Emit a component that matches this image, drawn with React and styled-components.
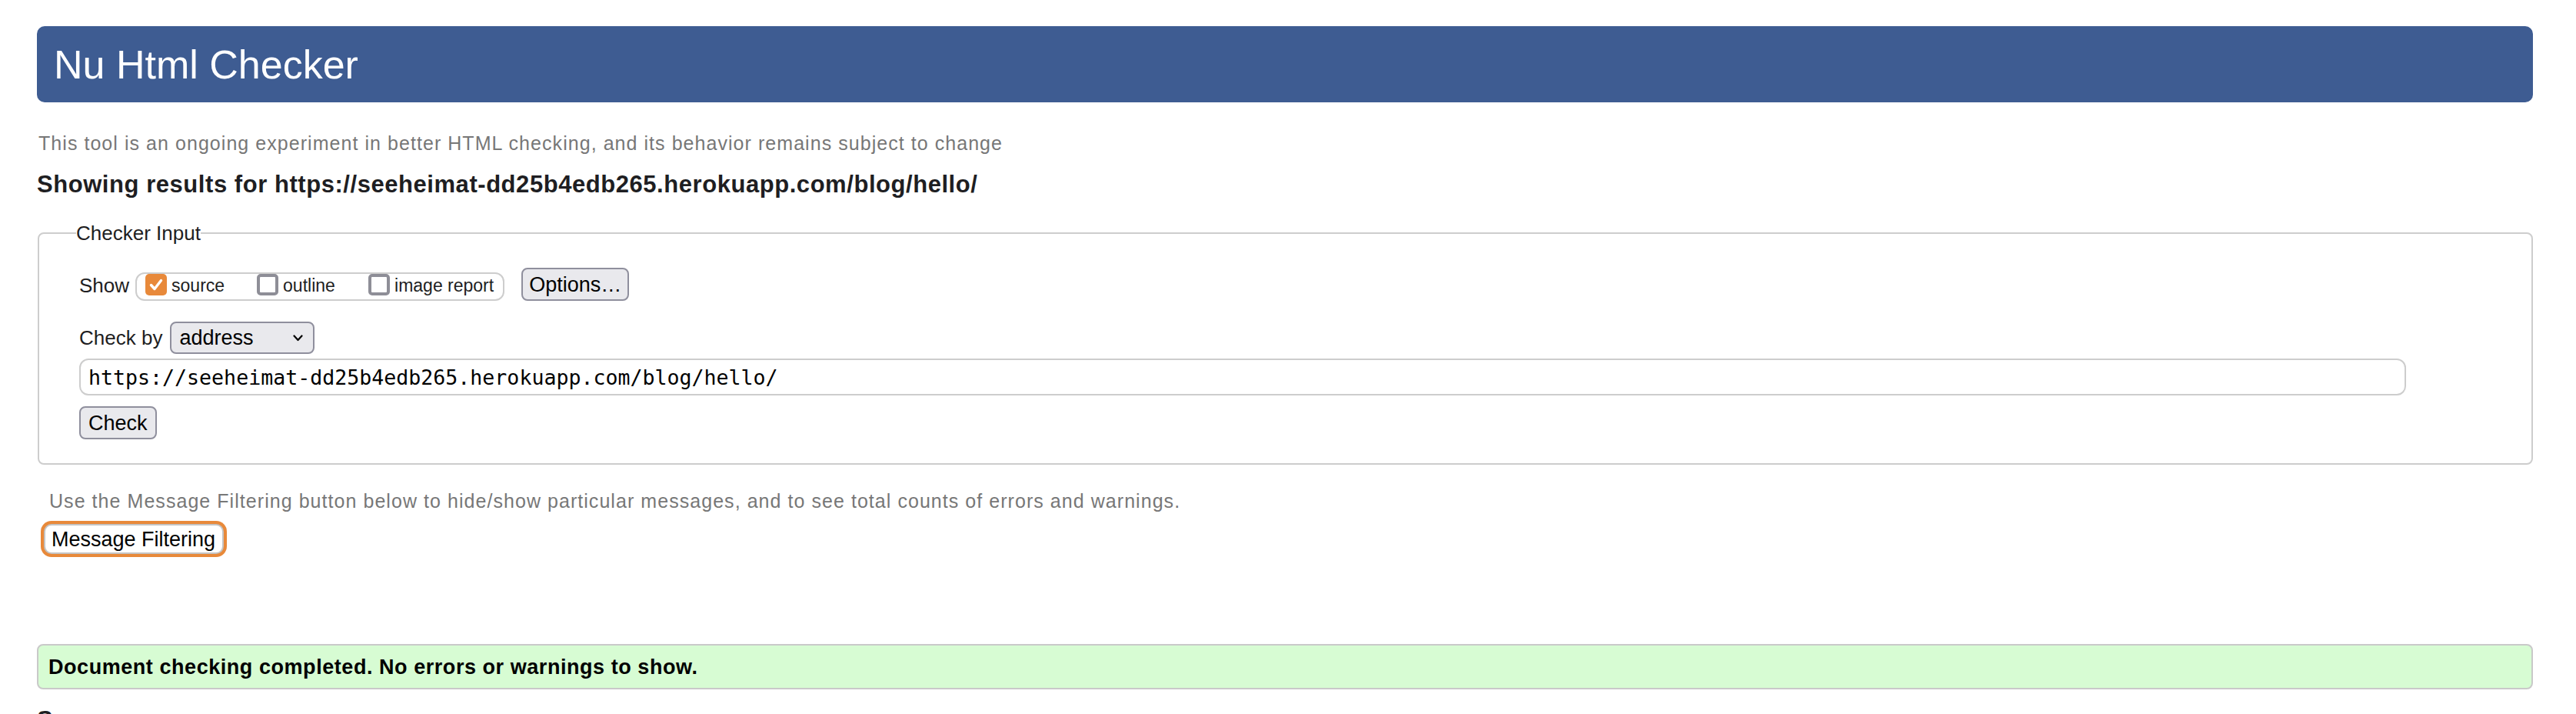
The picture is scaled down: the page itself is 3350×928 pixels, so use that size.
import React from 'react';
import styled, { createGlobalStyle } from 'styled-components';

const GlobalStyle = createGlobalStyle`
  html, body {
    margin: 0;
    padding: 0;
    background: #fff;
  }
  body {
    font-family: "Liberation Sans", Arial, sans-serif;
    color: #1e1e22;
  }
`;

const Page = styled.div`
  display: flex;
  flex-direction: column;
  align-items: stretch;
  padding: 34px 56px 0 48px;
`;

const Header = styled.header`
  height: 99px;
  box-sizing: border-box;
  display: flex;
  align-items: center;
  padding-left: 22px;
  background: #3e5c92;
  border-radius: 10px;
`;

const Title = styled.h1`
  margin: 0;
  font-size: 52px;
  font-weight: normal;
  line-height: 52px;
  color: #fff;
`;

// grey helper lines
const Note = styled.p`
  margin: ${({ $top }) => $top}px 0 0 ${({ $left }) => $left}px;
  font-size: 25px;
  line-height: 28px;
  letter-spacing: 1.05px;
  color: #777;
`;

const Heading = styled.h2`
  margin: 22px 0 0;
  font-size: 31px;
  line-height: 36px;
  font-weight: bold;
  letter-spacing: 0.55px;
  color: #1e1e22;
`;

const Fieldset = styled.fieldset`
  margin: 30px 0 0 1px;
  padding: 30px 24px 31px 52px;
  border: 2px solid #cdcdcd;
  border-radius: 8px;
  min-width: 0;
`;

const Legend = styled.legend`
  margin-left: -4px;
  padding: 0;
  font-size: 26px;
  line-height: 30px;
  color: #1e1e22;
`;

const Row = styled.div`
  display: flex;
  align-items: ${({ $align }) => $align || 'center'};
  margin-top: ${({ $top }) => $top || 0}px;
`;

const Label = styled.span`
  font-size: 26px;
  line-height: 30px;
  padding-bottom: ${({ $lift }) => $lift || 0}px;
  margin-right: ${({ $gap }) => $gap}px;
  color: #1e1e22;
`;

const Pill = styled.div`
  display: flex;
  align-items: flex-start;
  box-sizing: border-box;
  height: 37px;
  padding: 0 12px 0 11px;
  border: 2px solid #cdcdcd;
  border-radius: 12px;
`;

const Option = styled.label`
  display: flex;
  align-items: flex-start;
  width: ${({ $last }) => ($last ? 'auto' : '145px')};
`;

const Box = styled.span`
  box-sizing: border-box;
  width: 28px;
  height: 28px;
  flex: none;
  display: flex;
  align-items: center;
  justify-content: center;
  border-radius: 5px;
  background: ${({ $checked }) => ($checked ? '#e8893a' : '#fff')};
  border: ${({ $checked }) => ($checked ? 'none' : '4px solid #8e8e97')};
`;

const OptionText = styled.span`
  margin-left: 6px;
  font-size: 23px;
  line-height: 31px;
  color: #1e1e22;
`;

const FormButton = styled.button`
  box-sizing: border-box;
  height: 43px;
  padding: 0 ${({ $pad }) => $pad}px;
  margin-left: ${({ $left }) => $left || 0}px;
  font-family: "Liberation Sans", Arial, sans-serif;
  font-size: 27px;
  line-height: 30px;
  color: #000;
  background: #e9e9ed;
  border: 2px solid #8f8f9d;
  border-radius: 8px;
  align-self: flex-start;
`;

const Select = styled.div`
  box-sizing: border-box;
  width: 188px;
  height: 42px;
  display: flex;
  align-items: center;
  justify-content: space-between;
  padding: 0 13px 0 10px;
  background: #e9e9ed;
  border: 2px solid #8f8f9d;
  border-radius: 8px;
  font-size: 27px;
  color: #000;
`;

const UrlField = styled.div`
  box-sizing: border-box;
  width: 3026px;
  height: 48px;
  margin-top: 6px;
  display: flex;
  align-items: center;
  padding-left: 10px;
  border: 2px solid #cdcdcd;
  border-radius: 12px;
  font-family: "DejaVu Sans Mono", "Liberation Mono", monospace;
  font-size: 26.6px;
  color: #000;
`;

const FilterButton = styled.button`
  align-self: flex-start;
  box-sizing: border-box;
  height: 39px;
  margin: 16px 0 0 9px;
  padding: 0 9px 0 8px;
  font-family: "Liberation Sans", Arial, sans-serif;
  font-size: 27px;
  line-height: 30px;
  color: #000;
  background: #fff;
  border: 2px solid #c4c4c4;
  border-radius: 10px;
  box-shadow: 0 0 0 4px #e8893a;
`;

const Success = styled.div`
  box-sizing: border-box;
  height: 59px;
  margin-top: 117px;
  display: flex;
  align-items: center;
  padding-left: 13px;
  background: #d7fcd3;
  border: 2px solid #c9c9c9;
  border-radius: 8px;
  font-size: 27px;
  line-height: 30px;
  font-weight: bold;
  letter-spacing: 0.55px;
  color: #000;
`;

function Check() {
  return (
    <svg width="22" height="22" viewBox="0 0 22 22">
      <path d="M4.5 11.5 L9 16.5 L17.5 5.5" fill="none" stroke="#fff" strokeWidth="3.4" strokeLinecap="round" strokeLinejoin="round" />
    </svg>
  );
}

function Chevron() {
  return (
    <svg width="13" height="9" viewBox="0 0 13 9">
      <path d="M1.5 1.5 L6.5 7 L11.5 1.5" fill="none" stroke="#000" strokeWidth="2.2" strokeLinecap="round" strokeLinejoin="round" />
    </svg>
  );
}

const showOptions = [
  { name: 'source', checked: true },
  { name: 'outline', checked: false },
  { name: 'image report', checked: false, last: true },
];

export default function App() {
  return (
    <>
      <GlobalStyle />
      <Page>
        <Header>
          <Title>Nu Html Checker</Title>
        </Header>
        <Note $top={39} $left={2}>
          This tool is an ongoing experiment in better HTML checking, and its behavior remains subject to change
        </Note>
        <Heading>Showing results for https://seeheimat-dd25b4edb265.herokuapp.com/blog/hello/</Heading>

        <Fieldset>
          <Legend>Checker Input</Legend>
          <Row $align="flex-end">
            <Label $gap={8} $lift={5}>Show</Label>
            <Pill>
              {showOptions.map((o) => (
                <Option key={o.name} $last={o.last}>
                  <Box $checked={o.checked}>{o.checked && <Check />}</Box>
                  <OptionText>{o.name}</OptionText>
                </Option>
              ))}
            </Pill>
            <FormButton $pad={8} $left={22}>Options…</FormButton>
          </Row>
          <Row $top={27}>
            <Label $gap={10}>Check by</Label>
            <Select>
              <span>address</span>
              <Chevron />
            </Select>
          </Row>
          <UrlField>https://seeheimat-dd25b4edb265.herokuapp.com/blog/hello/</UrlField>
          <Row $top={14}>
            <FormButton $pad={10}>Check</FormButton>
          </Row>
        </Fieldset>

        <Note $top={33} $left={16}>
          Use the Message Filtering button below to hide/show particular messages, and to see total counts of errors and warnings.
        </Note>
        <FilterButton>Message Filtering</FilterButton>

        <Success>Document checking completed. No errors or warnings to show.</Success>
        <Heading>Source</Heading>
      </Page>
    </>
  );
}
